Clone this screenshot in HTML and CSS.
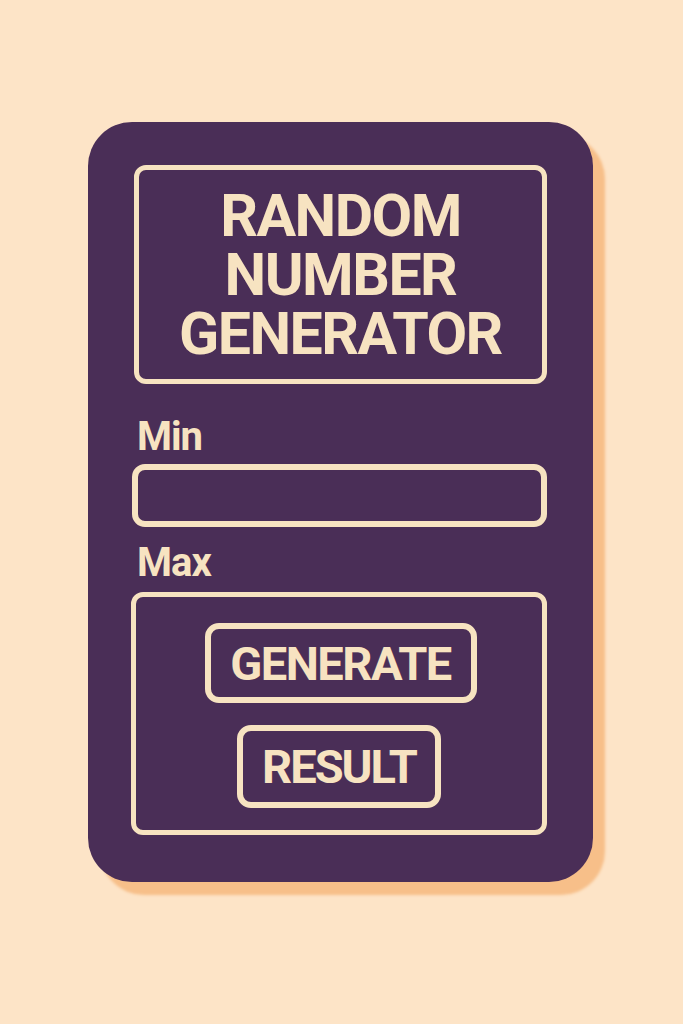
FILE: index.html
```html
<!DOCTYPE html>
<html lang="en">
<head>
    <meta charset="UTF-8">
    <meta name="viewport" content="width=device-width, initial-scale=1.0">
    <title>Random Number Generator</title>
    <link rel="stylesheet" href="styles.css">
</head>
<body>
    <div class="card">
        <div class="titlebox">
            <h1>RANDOM<br>NUMBER<br>GENERATOR</h1>
        </div>

        <label for="minnum" class="label">Min</label>
        <input type="number" id="minnum" class="field">

        <span class="label label-max">Max</span>
        <div class="panel">
            <button class="btn btn-generate" id="btn">GENERATE</button>
            <div class="btn btn-result" id="result">RESULT</div>
        </div>
    </div>

    <script>
        // get from UI
        const getmin = document.getElementById("minnum"),
              getbtn = document.getElementById("btn"),
              getresult = document.getElementById("result");

        const max = 100;

        getbtn.addEventListener('click', function(){
            let min = parseInt(getmin.value) || 1;
            getresult.textContent = Math.floor(Math.random() * (max - min + 1) + min);
        });
    </script>
</body>
</html>
```

FILE: styles.css
```css
body{
    margin: 0;
    min-height: 1024px;

    display: flex;
    justify-content: center;
    align-items: flex-start;

    font-family: Roboto, "Liberation Sans", sans-serif;
    background-color: #fde4c7;
}

.card{
    width: 505px;
    height: 760px;
    margin-top: 122px;
    margin-left: -2px;
    padding: 43px 46px 0 44px;
    box-sizing: border-box;

    display: flex;
    flex-direction: column;

    background-color: #4a2e57;
    border-radius: 44px;
    box-shadow: 12px 13px 3px #f7bf89;
}

.titlebox{
    height: 219px;
    margin-left: 2px;
    box-sizing: border-box;

    display: flex;
    justify-content: center;
    align-items: center;

    border: 5px solid #f7e3c1;
    border-radius: 12px;
}

h1{
    margin: 0;
    font-size: 59px;
    font-weight: 700;
    line-height: 59px;
    letter-spacing: -1.5px;
    text-align: center;
    color: #f7e3c1;
}

.label{
    display: block;
    margin: 29px 0 3px 5px;

    font-size: 40px;
    font-weight: 700;
    line-height: 48px;
    letter-spacing: -1px;
    color: #f7e3c1;
}

.label-max{
    margin-top: 12px;
    margin-bottom: 5px;
}

.field{
    height: 63px;
    box-sizing: border-box;
    padding: 0 14px;

    background: transparent;
    border: 6px solid #f7e3c1;
    border-radius: 13px;
    outline: none;

    font: 700 30px Roboto, sans-serif;
    color: #f7e3c1;
}

.panel{
    height: 243px;
    margin-left: -1px;
    padding-top: 26px;
    box-sizing: border-box;

    display: flex;
    flex-direction: column;
    align-items: center;
    gap: 22px;

    border: 5px solid #f7e3c1;
    border-radius: 12px;
}

.btn{
    box-sizing: border-box;

    display: flex;
    justify-content: center;
    align-items: center;

    background: transparent;
    border: 6px solid #f7e3c1;
    border-radius: 14px;

    font-family: Roboto, sans-serif;
    font-size: 47px;
    font-weight: 700;
    letter-spacing: -1.5px;
    color: #f7e3c1;
}

.btn-generate{
    width: 272px;
    height: 80px;
    margin-left: 3px;
    padding: 0;
    cursor: pointer;
}

.btn-result{
    width: 204px;
    height: 83px;
    letter-spacing: -2px;
}
```
